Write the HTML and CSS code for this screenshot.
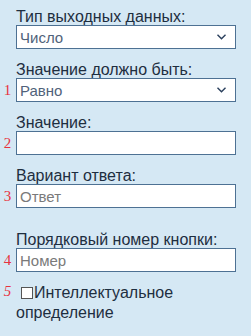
FILE: index.html
```html
<!DOCTYPE html>
<html lang="ru">
<head>
<meta charset="utf-8">
<link rel="stylesheet" href="styles.css">
</head>
<body>
<form class="panel">
  <div class="num"></div>
  <label class="label">Тип выходных данных:</label>
  <div class="num"></div>
  <div class="control select"><span class="value">Число</span><svg class="chev" width="9" height="6" viewBox="0 0 9 6"><path d="M0.5 0.8 L4.5 4.8 L8.5 0.8" fill="none" stroke="#2a3f5c" stroke-width="1.4"/></svg></div>

  <div class="num"></div>
  <label class="label gap">Значение должно быть:</label>
  <div class="num">1</div>
  <div class="control select"><span class="value">Равно</span><svg class="chev" width="9" height="6" viewBox="0 0 9 6"><path d="M0.5 0.8 L4.5 4.8 L8.5 0.8" fill="none" stroke="#2a3f5c" stroke-width="1.4"/></svg></div>

  <div class="num"></div>
  <label class="label gap">Значение:</label>
  <div class="num">2</div>
  <div class="control input"></div>

  <div class="num"></div>
  <label class="label gap">Вариант ответа:</label>
  <div class="num">3</div>
  <div class="control input"><span class="ph">Ответ</span></div>

  <div class="num"></div>
  <label class="label gapbig">Порядковый номер кнопки:</label>
  <div class="num">4</div>
  <div class="control input"><span class="ph">Номер</span></div>

  <div class="num num5">5</div>
  <div class="check"><span class="box"></span>Интеллектуальное определение</div>
</form>
</body>
</html>
```
FILE: styles.css
```css
html, body {
  margin: 0;
  padding: 0;
  background: #d5e8f4;
}
.panel {
  display: grid;
  grid-template-columns: 16px 220px;
  padding-top: 8px;
  font-family: "Liberation Sans", Arial, sans-serif;
  color: #1e2e40;
}
.num {
  font-family: "Liberation Serif", "Times New Roman", serif;
  font-size: 15px;
  color: #e8333f;
  display: flex;
  align-items: center;
  justify-content: center;
  padding-right: 1px;
}
.label {
  font-size: 16px;
  line-height: 17px;
  height: 17px;
}
.gap { margin-top: 12px; }
.gapbig { margin-top: 23px; }
.control {
  box-sizing: border-box;
  height: 24px;
  border: 1px solid #4d7193;
  background: #fff;
  display: flex;
  align-items: center;
  padding-left: 3px;
  font-size: 15px;
}
.select { justify-content: space-between; padding-right: 9px; }
.value { color: #50627a; }
.ph { color: #7a7a7a; }
.chev { display: block; }
.num5 { align-items: flex-start; padding-top: 11px; font-style: italic; }
.check {
  margin-top: 11px;
  font-size: 16px;
  line-height: 20px;
}
.box {
  display: inline-block;
  box-sizing: border-box;
  width: 12px;
  height: 12px;
  border: 1px solid #555;
  background: #fff;
  margin-left: 5px;
  margin-right: 1px;
  vertical-align: -1px;
}
```
